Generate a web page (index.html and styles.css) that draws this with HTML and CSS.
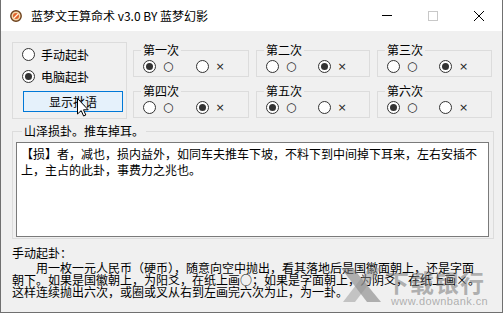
FILE: index.html
```html
<!DOCTYPE html>
<html lang="zh-CN">
<head>
  <meta charset="UTF-8" />
  <title>蓝梦文王算命术 v3.0 BY 蓝梦幻影</title>
  <link rel="stylesheet" href="styles.css">
</head>
<body>

  <div class="window">

    <!-- title bar -->
    <div class="titlebar">
      <svg class="app-icon" viewBox="0 0 12 12">
        <circle cx="6" cy="6" r="5.2" fill="#f6d9a8" stroke="#6b3f1c" stroke-width="1.4"/>
        <circle cx="6" cy="6" r="3" fill="#e0622a"/>
        <path d="M3.5 8.5 L8.5 3.5" stroke="#fff3dc" stroke-width="1.2"/>
      </svg>
      <span class="title">蓝梦文王算命术 v3.0 BY 蓝梦幻影</span>
      <div class="controls">
        <span class="ctl ctl-min"></span>
        <span class="ctl ctl-max"></span>
        <span class="ctl ctl-close">
          <svg viewBox="0 0 10 10" width="10" height="10"><path d="M0 0 L10 10 M10 0 L0 10" stroke="#000" stroke-width="1"/></svg>
        </span>
      </div>
    </div>

    <div class="client">

      <div class="top">
        <!-- mode -->
        <div class="mode">
          <div class="radio-row"><span class="radio"></span>手动起卦</div>
          <div class="radio-row"><span class="radio on"></span>电脑起卦</div>
          <button class="btn">显示批语</button>
        </div>

        <!-- six throws -->
        <div class="throws">
          <fieldset class="throw">
            <legend>第一次</legend>
            <div class="opts">
              <span class="opt"><span class="radio on"></span><span class="mark">○</span></span>
              <span class="opt"><span class="radio"></span><span class="mark x">×</span></span>
            </div>
          </fieldset>
          <fieldset class="throw">
            <legend>第二次</legend>
            <div class="opts">
              <span class="opt"><span class="radio"></span><span class="mark">○</span></span>
              <span class="opt"><span class="radio on"></span><span class="mark x">×</span></span>
            </div>
          </fieldset>
          <fieldset class="throw">
            <legend>第三次</legend>
            <div class="opts">
              <span class="opt"><span class="radio"></span><span class="mark">○</span></span>
              <span class="opt"><span class="radio on"></span><span class="mark x">×</span></span>
            </div>
          </fieldset>
          <fieldset class="throw">
            <legend>第四次</legend>
            <div class="opts">
              <span class="opt"><span class="radio"></span><span class="mark">○</span></span>
              <span class="opt"><span class="radio on"></span><span class="mark x">×</span></span>
            </div>
          </fieldset>
          <fieldset class="throw">
            <legend>第五次</legend>
            <div class="opts">
              <span class="opt"><span class="radio on"></span><span class="mark">○</span></span>
              <span class="opt"><span class="radio"></span><span class="mark x">×</span></span>
            </div>
          </fieldset>
          <fieldset class="throw">
            <legend>第六次</legend>
            <div class="opts">
              <span class="opt"><span class="radio on"></span><span class="mark">○</span></span>
              <span class="opt"><span class="radio"></span><span class="mark x">×</span></span>
            </div>
          </fieldset>
        </div>
      </div>

      <!-- result -->
      <fieldset class="result">
        <legend>山泽损卦。推车掉耳。</legend>
        <div class="memo">【损】者，减也，损内益外，如同车夫推车下坡，不料下到中间掉下耳来，左右安插不<br>上，主占的此卦，事费力之兆也。</div>
      </fieldset>

      <!-- help -->
      <div class="help">
        <div class="help-title">手动起卦：</div>
        <div class="help-text">　　用一枚一元人民币（硬币），随意向空中抛出，看其落地后是国徽面朝上，还是字面<br>朝下。如果是国徽朝上，为阳爻，在纸上画○；如果是字面朝上，为阴爻，在纸上画×。<br>这样连续抛出六次，或圈或叉从右到左画完六次为止，为一卦。</div>
      </div>

    </div>

    <!-- mouse pointer over the button -->
    <svg class="cursor" viewBox="0 0 12 19" width="12" height="19">
      <path d="M0.5 0.5 L0.5 16 L4.2 12.6 L6.6 18 L8.8 17 L6.5 11.8 L11.2 11.8 Z" fill="#fff" stroke="#000" stroke-width="1"/>
    </svg>

    <!-- watermark -->
    <div class="watermark">
      <svg class="wm-logo" viewBox="0 0 40 34" width="40" height="34">
        <polygon points="0,0 12,0 40,34 26,34" fill="rgba(120,120,120,0.55)"/>
        <polygon points="28,0 40,0 14,34 2,34" fill="rgba(150,150,150,0.5)"/>
      </svg>
      <div class="wm-text">
        <div class="wm-name">下载银行</div>
        <div class="wm-url">www.downbank.cn</div>
      </div>
    </div>

  </div>

</body>
</html>
```

FILE: styles.css
```css
body { margin: 0; font-family: "Noto Sans CJK SC", "Noto Sans", sans-serif; font-size: 12px; color: #000; }

.window { width: 503px; height: 313px; box-sizing: border-box; border: 1px solid #707070; border-top: none; background: #f0f0f0; position: relative; overflow: hidden; }

/* title bar */
.titlebar { height: 31px; background: #fff; display: flex; align-items: center; }
.app-icon { width: 12px; height: 12px; margin-left: 9px; flex: none; }
.title { margin-left: 9px; line-height: 14px; }
.controls { margin-left: auto; display: flex; height: 100%; }
.ctl { width: 46px; display: flex; align-items: center; justify-content: center; }
.ctl-min::before { content: ""; width: 10px; height: 1px; background: #000; }
.ctl-max::before { content: ""; width: 10px; height: 10px; box-sizing: border-box; border: 1px solid #c8c8c8; }

/* client area */
.client { padding: 11px 0 0 11px; }
.top { display: flex; align-items: flex-start; }

.mode { width: 115px; height: 77px; box-sizing: border-box; border: 1px solid #dcdcdc; padding: 5px 0 0 9px; }
.radio-row { display: flex; align-items: center; gap: 6px; height: 13px; line-height: 13px; }
.radio-row + .radio-row { margin-top: 9px; }
.btn { display: block; margin: 8px 0 0 1px; width: 100px; height: 21px; padding: 0; border: 1px solid #0078d7; background: #e5f1fb; font: inherit; font-size: 12px; color: #000; }

.radio { width: 13px; height: 13px; box-sizing: border-box; border: 1px solid #333; border-radius: 50%; background: #fff; position: relative; flex: none; }
.radio.on::after { content: ""; position: absolute; left: 2px; top: 2px; width: 7px; height: 7px; border-radius: 50%; background: #333; }

.throws { display: grid; grid-template-columns: 116px 114px 115px; grid-template-rows: 33px 33px; column-gap: 7px; row-gap: 8px; margin: 2px 0 0 6px; }
.throw { margin: 0; min-width: 0; border: 1px solid #dcdcdc; padding: 4px 0 0 9px; }
legend { padding: 0 2px; margin-left: -2px; line-height: 12px; font-size: 12px; }
.opts { display: flex; }
.opt { width: 53px; height: 13px; display: flex; align-items: center; gap: 7px; }
.mark { font-family: "DejaVu Sans", sans-serif; font-size: 12px; line-height: 13px; color: #222; }
.mark.x { font-size: 11px; }

.result { margin: 6px 0 0 0; width: 482px; box-sizing: border-box; border: 1px solid #dcdcdc; padding: 5px 4px 1px 3px; }
.result legend { margin-left: 6px; }
.memo { height: 95px; box-sizing: border-box; border: 1px solid #7a7a7a; background: #fff; padding: 3px 4px; line-height: 16px; white-space: nowrap; }

.help { margin-top: 7px; white-space: nowrap; }
.help-title { line-height: 13px; }
.help-text { margin-top: 3px; line-height: 12px; }

/* overlays */
.cursor { position: absolute; left: 76px; top: 98px; }
.watermark { position: absolute; left: 340px; top: 268px; display: flex; align-items: flex-start; gap: 4px; }
.wm-text { margin-top: 2px; }
.wm-name { font-size: 24px; font-weight: bold; line-height: 24px; letter-spacing: 1px; color: rgba(110,110,110,0.5); }
.wm-url { margin: 2px 0 0 6px; font-family: "Liberation Sans", sans-serif; font-size: 11px; line-height: 11px; letter-spacing: 0.4px; color: rgba(130,130,130,0.6); }
```
